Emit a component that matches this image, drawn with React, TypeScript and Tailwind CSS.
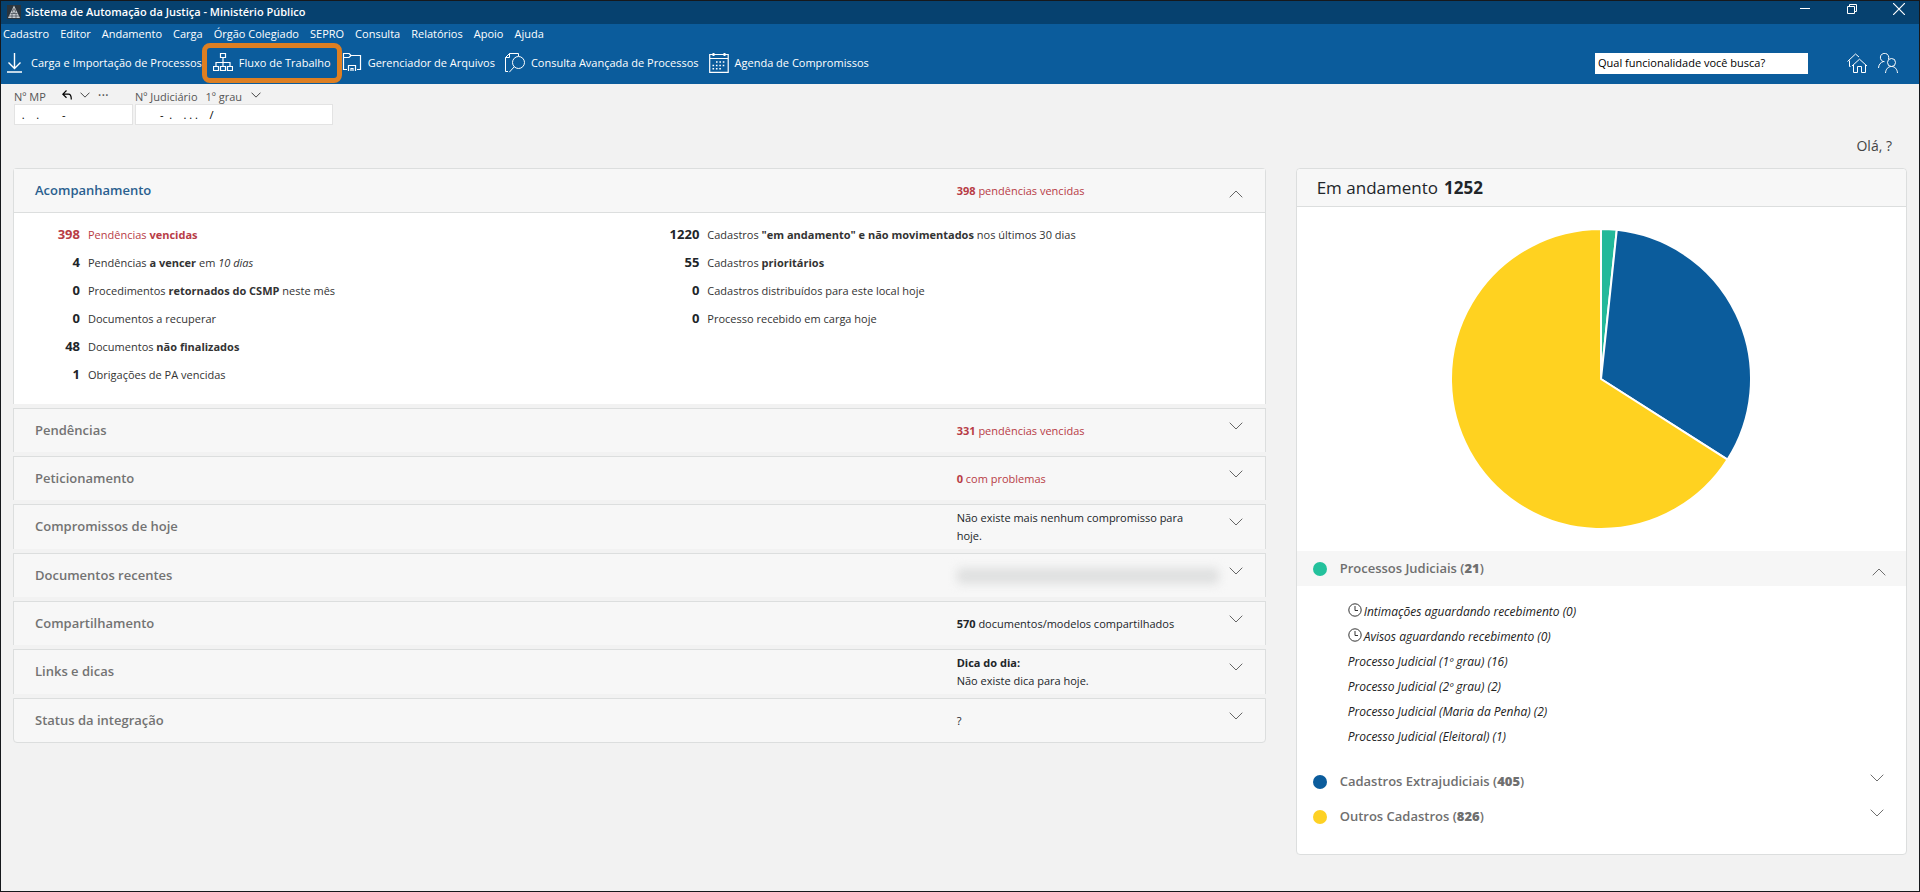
import type { ReactNode } from "react";
import { clsx } from "clsx";

const menus = ["Cadastro", "Editor", "Andamento", "Carga", "Órgão Colegiado", "SEPRO", "Consulta", "Relatórios", "Apoio", "Ajuda"];

type Stat = { count: number; text: ReactNode; danger?: boolean };

const leftStats: Stat[] = [
  { count: 398, text: <>Pendências <b>vencidas</b></>, danger: true },
  { count: 4, text: <>Pendências <b>a vencer</b> em <i>10 dias</i></> },
  { count: 0, text: <>Procedimentos <b>retornados do CSMP</b> neste mês</> },
  { count: 0, text: "Documentos a recuperar" },
  { count: 48, text: <>Documentos <b>não finalizados</b></> },
  { count: 1, text: "Obrigações de PA vencidas" },
];

const rightStats: Stat[] = [
  { count: 1220, text: <>Cadastros <b>"em andamento" e não movimentados</b> nos últimos 30 dias</> },
  { count: 55, text: <>Cadastros <b>prioritários</b></> },
  { count: 0, text: "Cadastros distribuídos para este local hoje" },
  { count: 0, text: "Processo recebido em carga hoje" },
];

const sections: { title: string; summary: ReactNode; danger?: boolean }[] = [
  { title: "Pendências", summary: <><b>331</b> pendências vencidas</>, danger: true },
  { title: "Peticionamento", summary: <><b>0</b> com problemas</>, danger: true },
  { title: "Compromissos de hoje", summary: "Não existe mais nenhum compromisso para hoje." },
  {
    title: "Documentos recentes",
    summary: <span className="-mr-3 block h-4 rounded-sm bg-[#dfe0e0] blur-[5px]" />,
  },
  { title: "Compartilhamento", summary: <><b>570</b> documentos/modelos compartilhados</> },
  { title: "Links e dicas", summary: <><b>Dica do dia:</b><br />Não existe dica para hoje.</> },
  { title: "Status da integração", summary: "?" },
];

const slices = [
  { value: 21, color: "#23b99a" },
  { value: 405, color: "#0b5c9c" },
  { value: 826, color: "#ffd220" },
];

const judicial = [
  { label: "Intimações aguardando recebimento (0)", clock: true },
  { label: "Avisos aguardando recebimento (0)", clock: true },
  { label: "Processo Judicial (1º grau) (16)" },
  { label: "Processo Judicial (2º grau) (2)" },
  { label: "Processo Judicial (Maria da Penha) (2)" },
  { label: "Processo Judicial (Eleitoral) (1)" },
];

function Chevron({ up, className = "h-2 w-3.5" }: { up?: boolean; className?: string }) {
  return (
    <svg viewBox="0 0 14 8" fill="none" stroke="currentColor" className={clsx("shrink-0", className)}>
      <path d={up ? "M.7 7.3 7 1l6.3 6.3" : "M.7.7 7 7 13.3.7"} />
    </svg>
  );
}

function Icon({ children }: { children: ReactNode }) {
  return (
    <svg viewBox="0 0 20 20" fill="none" stroke="currentColor" className="h-5 w-5 shrink-0">
      {children}
    </svg>
  );
}

const DownloadIcon = () => (
  <Icon>
    <path d="M9.5 0v15M3.5 9.5l6 6 6-6M2 19h15" strokeWidth={1.4} />
  </Icon>
);

const FlowIcon = () => (
  <Icon>
    <path d="M7.5.5h5v4h-5zM.5 13.5h5v4h-5zM7.5 13.5h5v4h-5zM14.5 13.5h5v4h-5z" strokeWidth={1.2} />
    <path d="M10 5v8.5M3 13.5v-4h14v4" strokeWidth={1.2} />
  </Icon>
);

const FilesIcon = () => (
  <Icon>
    <path d="M5 16.5H1.5V.5H7l2 2h9.5v14H15M1.5 4.5H7l2-2" strokeWidth={1.2} />
    <path d="M6.5 18v-5.500h7V18M9 18v-2.500h2V18" strokeWidth={1.2} />
  </Icon>
);

const SearchDocIcon = () => (
  <Icon>
    <path d="M3 18.5H.5V4.5l4-4h9V3M4.5.5v4h-4" />
    <circle cx="13.5" cy="9.5" r="6" />
    <path d="m9.3 13.7-5 5.5" />
  </Icon>
);

const CalendarIcon = () => (
  <Icon>
    <path d="M.7 1.5h18.5v17.8H.7zM.7 5.5h18.5" strokeWidth={1.2} />
    <path d="M4.5 0v3M15.5 0v3" strokeWidth={2} />
    <path d="M7 9h10M3.5 12.5H17M3.5 15.8h10" strokeWidth={1.6} strokeDasharray="1.6 1.8" />
  </Icon>
);

const HomeIcon = () => (
  <Icon>
    <path d="M3.5 13.5h-1v-6M.5 8.5l8-7.5L12 4M5 13l7.5-6.8L20 13M6.5 12v7.5h4v-6h4v6h4V12" />
  </Icon>
);

const UsersIcon = () => (
  <Icon>
    <path d="M10.5 6a4.2 4.2 0 1 0-4 2.7M.5 15c.3-3.5 2-5.7 5-6.500" />
    <circle cx="13.5" cy="9.5" r="4" />
    <path d="M7.5 20c.3-3.8 2.5-6.5 6-6.5s5.7 2.7 6 6.5" />
  </Icon>
);

function ToolButton({ icon, label, highlight }: { icon: ReactNode; label: string; highlight?: boolean }) {
  return (
    <button
      type="button"
      className={clsx(
        "flex h-10 items-center gap-1.5 whitespace-nowrap",
        highlight && "-mx-2.5 rounded-lg border-5 border-[#de7f22] px-1.5",
      )}
    >
      {icon}
      {label}
    </button>
  );
}

function TitleBar() {
  return (
    <div className="flex h-[23px] items-start justify-between bg-[#06416f] pt-0.5 pr-[14px] pl-1.5 text-white">
      <div className="flex items-center gap-1">
        <svg viewBox="0 0 14 14" className="h-3.5 w-3.5">
          <rect width="14" height="14" fill="#2b343c" />
          <path d="M7 .5 13 13H1z" fill="#c9cdd0" />
          <path d="M5 5h4M3.5 8.5h7M2 11h10M7 3v2M5 5l1.5 3.5M9 5 7.500 8.500M5 8.500V13M9 8.500V13" stroke="#2b343c" strokeWidth=".6" />
        </svg>
        <h1 className="text-[11px] leading-[18px] font-semibold">Sistema de Automação da Justiça - Ministério Público</h1>
      </div>
      <div className="flex items-start gap-[35px]">
        <button type="button" aria-label="Minimizar">
          <svg viewBox="0 0 12 12" className="h-3 w-3" stroke="currentColor">
            <path d="M1 5.5h10" />
          </svg>
        </button>
        <button type="button" aria-label="Restaurar">
          <svg viewBox="0 0 12 12" className="h-3 w-3" stroke="currentColor" fill="none">
            <path d="M1.5 3.5h7v7h-7zM3.5 3V1.5h7v7H9" />
          </svg>
        </button>
        <button type="button" aria-label="Fechar">
          <svg viewBox="0 0 12 12" className="h-3 w-3" stroke="currentColor">
            <path d="m0 0 12 12M12 0 0 12" strokeWidth="1.2" />
          </svg>
        </button>
      </div>
    </div>
  );
}

function Header() {
  return (
    <header className="bg-[#0b5c9c] text-[11px] text-white">
      <TitleBar />
      <nav className="flex h-[19px] items-center gap-[11px] pt-px pl-0.5">
        {menus.map((menu) => (
          <a key={menu} href="#" className="whitespace-nowrap">
            {menu}
          </a>
        ))}
      </nav>
      <div className="flex items-center justify-between pr-[21px] pb-px pl-1">
        <div className="flex items-center gap-2.5">
          <ToolButton icon={<DownloadIcon />} label="Carga e Importação de Processos" />
          <ToolButton icon={<FlowIcon />} label="Fluxo de Trabalho" highlight />
          <ToolButton icon={<FilesIcon />} label="Gerenciador de Arquivos" />
          <ToolButton icon={<SearchDocIcon />} label="Consulta Avançada de Processos" />
          <ToolButton icon={<CalendarIcon />} label="Agenda de Compromissos" />
        </div>
        <div className="flex items-center gap-[11px]">
          <input
            aria-label="Qual funcionalidade você busca?"
            placeholder="Qual funcionalidade você busca?"
            className="mr-7 h-[21px] w-[213px] bg-white px-[3px] pb-0.5 text-black outline-none placeholder:text-black"
          />
          <button type="button" aria-label="Início">
            <HomeIcon />
          </button>
          <button type="button" aria-label="Usuários">
            <UsersIcon />
          </button>
        </div>
      </div>
    </header>
  );
}

function ProcessSearch() {
  return (
    <form className="flex gap-0.5 pt-[3px] pl-[13px] text-[11px] text-[#555]">
      <div className="w-[119px]">
        <div className="flex h-4 items-center gap-2">
          <label htmlFor="numero-mp" className="mr-2 pt-1">Nº MP</label>
          <button type="button" aria-label="Desfazer" className="text-black">
            <svg viewBox="0 0 10 10" className="h-2.5 w-2.5" fill="none" stroke="currentColor" strokeWidth="1.2">
              <path d="M4.5.5.8 4.2l3.7 3.5M1 4.2h5.500C8.500 4.2 9.300 5.500 9.300 9.500" />
            </svg>
          </button>
          <Chevron className="h-1.5 w-2.5 text-black" />
          <span className="text-sm">···</span>
        </div>
        <input
          id="numero-mp"
          defaultValue=" .    .        -"
          className="mt-px h-[21px] w-full border border-[#e3e3e3] bg-white px-1 whitespace-pre text-black outline-none"
        />
      </div>
      <div className="w-[198px]">
        <div className="flex h-4 items-center gap-2">
          <label htmlFor="numero-judiciario" className="pt-1">Nº Judiciário</label>
          <select aria-label="Grau" className="appearance-none pt-1 outline-none">
            <option>1º grau</option>
          </select>
          <Chevron className="h-1.5 w-2.5 text-black" />
        </div>
        <input
          id="numero-judiciario"
          defaultValue="       -  .    . . .    /"
          className="mt-px h-[21px] w-full border border-[#e3e3e3] bg-white px-1 whitespace-pre text-black outline-none"
        />
      </div>
    </form>
  );
}

function StatList({ stats }: { stats: Stat[] }) {
  return (
    <ul>
      {stats.map(({ count, text, danger }, i) => (
        <li key={i} className={clsx("flex h-7 items-center gap-2", danger ? "text-[#b83c46]" : "text-[#333]")}>
          <span className={clsx("w-15 text-right text-[13px] font-bold", !danger && "text-[#212529]")}>{count}</span>
          <span className="text-[11px]">{text}</span>
        </li>
      ))}
    </ul>
  );
}

function SectionHeader({ title, summary, danger, open }: { title: string; summary: ReactNode; danger?: boolean; open?: boolean }) {
  return (
    <button type="button" aria-expanded={!!open} className="flex min-h-[43px] w-full items-center py-1 pr-[22px] pl-[21px] text-left">
      <span className={clsx("flex-1 text-[13px] font-semibold", open ? "text-[#2a5f8f]" : "text-[#737373]")}>{title}</span>
      <span className={clsx("w-[250px] text-[11px] leading-[18px]", danger ? "text-[#b83c46]" : "text-[#212529]")}>{summary}</span>
      <Chevron up={open} className={clsx("ml-[22px] h-2 w-3.5 text-[#666]", open ? "mt-1.5" : "mt-[9px] self-start")} />
    </button>
  );
}

function Tracking() {
  return (
    <section className="col-span-2 flex flex-col gap-1">
      <div className="rounded-t border-x border-t border-[#dcdede] bg-white">
        <div className="border-b border-[#dcdede] bg-[#f7f7f7]">
          <SectionHeader title="Acompanhamento" summary={<><b>398</b> pendências vencidas</>} danger open />
        </div>
        <div className="grid grid-cols-2 px-1.5 pt-2 pb-[15px]">
          <StatList stats={leftStats} />
          <StatList stats={rightStats} />
        </div>
      </div>
      {sections.map((section) => (
        <div key={section.title} className="border-x border-t border-[#dcdede] bg-[#f7f7f7] last:rounded-b last:border-b">
          <SectionHeader {...section} />
        </div>
      ))}
    </section>
  );
}

function PieChart() {
  const total = slices.reduce((sum, slice) => sum + slice.value, 0);
  const point = (amount: number) => {
    const angle = (amount / total) * 2 * Math.PI;
    return `${150 + 150 * Math.sin(angle)} ${150 - 150 * Math.cos(angle)}`;
  };
  let start = 0;

  return (
    <svg viewBox="0 0 300 300" className="h-[300px] w-[300px]" stroke="#fff" strokeWidth={2}>
      {slices.map(({ value, color }) => {
        const from = point(start);
        start += value;
        return <path key={color} fill={color} d={`M150 150 L${from} A150 150 0 ${value > total / 2 ? 1 : 0} 1 ${point(start)} Z`} />;
      })}
    </svg>
  );
}

function Group({ label, count, dot, open }: { label: string; count: number; dot: string; open?: boolean }) {
  return (
    <button
      type="button"
      aria-expanded={!!open}
      className={clsx("flex h-[35px] w-full items-center pl-4 text-left text-[13px] font-semibold text-[#6f6f6f]", open ? "bg-[#f6f6f6] pr-5" : "pr-[22px]")}
    >
      <span className={clsx("mr-[13px] h-3.5 w-3.5 rounded-full", dot)} />
      <span className="flex-1">
        {label} (<b className="font-extrabold">{count}</b>)
      </span>
      <Chevron up={open} className={clsx("h-2 w-3.5", open ? "mt-1.5" : "mb-2")} />
    </button>
  );
}

function InProgress() {
  return (
    <section className="self-start rounded border border-[#dcdede] bg-white pb-5">
      <h2 className="flex h-[38px] items-center gap-1.5 rounded-t border-b border-[#dcdede] bg-[#f7f7f7] pl-5 text-[17px] text-[#212529]">
        Em andamento <b>1252</b>
      </h2>
      <div className="flex justify-center pt-[22px] pb-[22px]">
        <PieChart />
      </div>
      <Group label="Processos Judiciais" count={21} dot="bg-[#23c19c]" open />
      <ul className="pt-[13px] pb-[15px] pl-[51px] text-xs text-[#222] italic">
        {judicial.map(({ label, clock }) => (
          <li key={label}>
            <a href="#" className="flex h-[25px] items-center gap-0.5">
              {clock && (
                <svg viewBox="0 0 14 14" className="mb-1 h-3.5 w-3.5" fill="none" stroke="#333">
                  <circle cx="7" cy="7" r="6.2" />
                  <path d="M7 3v4.5h3" />
                </svg>
              )}
              {label}
            </a>
          </li>
        ))}
      </ul>
      <Group label="Cadastros Extrajudiciais" count={405} dot="bg-[#0b5c9c]" />
      <Group label="Outros Cadastros" count={826} dot="bg-[#fdd124]" />
    </section>
  );
}

export default function App() {
  return (
    <div className="min-h-screen border border-[#16181c] bg-[#f2f2f2] font-['Open_Sans','Noto_Sans',sans-serif]">
      <Header />
      <ProcessSearch />
      <main className="px-3">
        <p className="pt-[10px] pr-[15px] pb-[11px] text-right text-sm leading-[22px] text-[#444]">Olá, ?</p>
        <div className="grid grid-cols-3 gap-[30px]">
          <Tracking />
          <InProgress />
        </div>
      </main>
    </div>
  );
}
